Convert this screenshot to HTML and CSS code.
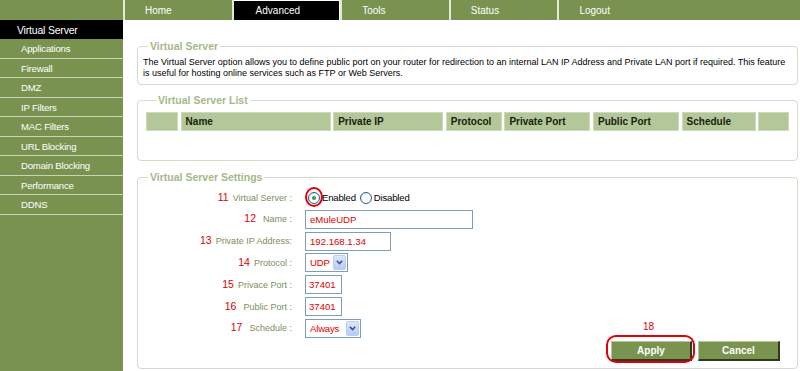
FILE: index.html
```html
<!DOCTYPE html>
<html>
<head>
<meta charset="utf-8">
<title>Virtual Server</title>
<link rel="stylesheet" href="styles.css">
</head>
<body>
<div class="page">
  <div class="corner"></div>
  <nav class="topnav">
    <span class="tab">Home</span>
    <span class="tab active">Advanced</span>
    <span class="tab">Tools</span>
    <span class="tab">Status</span>
    <span class="tab">Logout</span>
  </nav>
  <aside class="sidebar">
    <div class="side-title">Virtual Server</div>
    <ul class="side-list">
      <li>Applications</li>
      <li>Firewall</li>
      <li>DMZ</li>
      <li>IP Filters</li>
      <li>MAC Filters</li>
      <li>URL Blocking</li>
      <li>Domain Blocking</li>
      <li>Performance</li>
      <li>DDNS</li>
    </ul>
  </aside>
  <main class="content">
    <fieldset class="box box-intro">
      <legend>Virtual Server</legend>
      <p>The Virtual Server option allows you to define public port on your router for redirection to an internal LAN IP Address and Private LAN port if required. This feature is useful for hosting online services such as FTP or Web Servers.</p>
    </fieldset>
    <fieldset class="box box-list">
      <legend>Virtual Server List</legend>
      <div class="list-head">
        <div class="cell"></div>
        <div class="cell">Name</div>
        <div class="cell">Private IP</div>
        <div class="cell">Protocol</div>
        <div class="cell">Private Port</div>
        <div class="cell">Public Port</div>
        <div class="cell">Schedule</div>
        <div class="cell"></div>
      </div>
    </fieldset>
    <fieldset class="box box-settings">
      <legend>Virtual Server Settings</legend>
      <div class="form">
        <div class="lbl"><span class="num">11</span>Virtual Server :</div>
        <div class="radios">
          <span class="radio-mark"><span class="radio checked"></span></span><span class="rtext">Enabled</span>
          <span class="radio"></span><span class="rtext">Disabled</span>
        </div>

        <div class="lbl"><span class="num num-wide">12</span>Name :</div>
        <input class="inp w-name" type="text" value="eMuleUDP">

        <div class="lbl"><span class="num">13</span>Private IP Address:</div>
        <input class="inp w-ip" type="text" value="192.168.1.34">

        <div class="lbl"><span class="num">14</span>Protocol :</div>
        <div class="sel w-proto"><span class="sel-text">UDP</span><span class="sel-btn"><svg width="7" height="5" viewBox="0 0 7 5"><path d="M0.8 0.8L3.5 3.6L6.2 0.8" stroke="#3d5488" stroke-width="1.6" fill="none"/></svg></span></div>

        <div class="lbl"><span class="num">15</span>Privace Port :</div>
        <input class="inp w-port" type="text" value="37401">

        <div class="lbl"><span class="num num-wide">16</span>Public Port :</div>
        <input class="inp w-port" type="text" value="37401">

        <div class="lbl"><span class="num num-wide">17</span>Schedule :</div>
        <div class="sel w-sched"><span class="sel-text">Always</span><span class="sel-btn"><svg width="7" height="5" viewBox="0 0 7 5"><path d="M0.8 0.8L3.5 3.6L6.2 0.8" stroke="#3d5488" stroke-width="1.6" fill="none"/></svg></span></div>
      </div>
      <div class="actions">
        <div class="apply-wrap">
          <span class="mark-num">18</span>
          <button class="btn" type="button">Apply</button>
          <span class="ring"></span>
        </div>
        <button class="btn btn-cancel" type="button">Cancel</button>
      </div>
    </fieldset>
  </main>
</div>
</body>
</html>
```
FILE: styles.css
```css
html, body {
  margin: 0;
  padding: 0;
  background: #ffffff;
}
body {
  font-family: "Liberation Sans", Arial, sans-serif;
  font-size: 10px;
  color: #000;
}
.page {
  display: grid;
  grid-template-columns: 123px 677px;
  grid-template-rows: 20px 351px;
  width: 800px;
  height: 371px;
  overflow: hidden;
}
.corner {
  background: #7a9250;
}
.topnav {
  display: flex;
  background: #7a9250;
}
.tab {
  box-sizing: border-box;
  width: 108.6px;
  border-left: 2px solid #e2e9d4;
  color: #ffffff;
  padding-left: 20px;
  line-height: 21px;
  font-size: 10px;
}
.tab.active {
  background: #000;
  box-shadow: inset 0 1px 0 #ffffff, inset -1px 0 0 #ffffff;
  padding-left: 22px;
}
.sidebar {
  background: #7a9250;
  color: #ffffff;
}
.side-title {
  background: #000;
  height: 19px;
  line-height: 20px;
  padding-left: 17px;
  font-size: 10.5px;
  letter-spacing: -0.2px;
}
.side-list {
  list-style: none;
  margin: 0;
  padding: 0;
}
.side-list li {
  box-sizing: border-box;
  height: 19.56px;
  padding-top: 1px;
  line-height: 17.5px;
  border-bottom: 1px solid #c9d4b5;
  padding-left: 21px;
  font-size: 9.6px;
  letter-spacing: -0.2px;
}
.content {
  padding: 20px 2px 0 14px;
}
.box {
  margin: 0;
  padding: 0;
  border: 1px solid #d6dac8;
  border-radius: 4px;
  min-width: 0;
}
.box legend {
  margin-left: 10px;
  padding: 0 2px;
  font-weight: bold;
  color: #a6b88a;
  font-size: 10.5px;
  line-height: 12px;
}
.box-intro p {
  margin: 0;
  padding: 5px 5px 6px 5px;
  font-size: 9px;
  line-height: 10.5px;
}
.box-list {
  margin-top: 9px;
  padding: 6px 8px 29px 8px;
}
.list-head {
  display: grid;
  grid-template-columns: 32px 150px 110px 56px 86px 86px 74px 1fr;
  column-gap: 2.6px;
  height: 19px;
}
.cell {
  box-sizing: border-box;
  background: #b3c798;
  border: 1px solid #cddab9;
  font-weight: bold;
  color: #18220e;
  padding-left: 4px;
  line-height: 17px;
  font-size: 10px;
}
.box-settings {
  margin-top: 10px;
  padding: 5px 0 7px 0;
}
.form {
  display: grid;
  grid-template-columns: 154px 1fr;
  grid-auto-rows: 19px;
  column-gap: 13px;
  row-gap: 2.83px;
  align-items: center;
}
.lbl {
  text-align: right;
  color: #7c8e5c;
  line-height: 19px;
  font-size: 9px;
  white-space: nowrap;
}
.num {
  color: #e00000;
  font-size: 10.5px;
  margin-right: 4px;
}
.num-wide {
  margin-right: 7px;
}
.radios {
  display: flex;
  align-items: center;
  height: 19px;
  padding-left: 3px;
}
.radio-mark {
  position: relative;
  display: inline-flex;
}
.radio-mark::after {
  content: "";
  position: absolute;
  left: -3px;
  right: -3px;
  top: -5px;
  bottom: -3px;
  border: 2px solid #e00010;
  border-radius: 50%;
}
.radio {
  position: relative;
  box-sizing: border-box;
  width: 12px;
  height: 12px;
  border-radius: 50%;
  border: 1px solid #2c5a8c;
  background: radial-gradient(circle at 60% 65%, #ffffff 40%, #d8dce0 100%);
}
.radio.checked::after {
  content: "";
  position: absolute;
  left: 3px;
  top: 3px;
  width: 4px;
  height: 4px;
  border-radius: 50%;
  background: #2aa62a;
}
.rtext {
  margin: 0 4px 0 2px;
  font-size: 9.6px;
  letter-spacing: -0.2px;
  color: #000;
}
.inp {
  box-sizing: border-box;
  height: 19px;
  border: 1px solid #7f9db9;
  color: #e00000;
  font-family: "Liberation Sans", Arial, sans-serif;
  font-size: 9.6px;
  padding: 0 4px;
  margin: 0;
  background: #fff;
  justify-self: start;
}
.w-name { width: 168px; }
.w-ip { width: 86px; }
.w-port { width: 37px; padding: 0 3px; }
.sel {
  box-sizing: border-box;
  display: flex;
  height: 19px;
  border: 1px solid #7f9db9;
  background: #fff;
  justify-self: start;
}
.w-proto { width: 43px; }
.w-sched { width: 56px; }
.sel-text {
  flex: 1;
  padding-left: 4px;
  color: #e00000;
  line-height: 17px;
  font-size: 9.6px;
  letter-spacing: -0.2px;
}
.sel-btn {
  box-sizing: border-box;
  width: 13px;
  margin: 1px;
  border: 1px solid #b9cdf6;
  border-radius: 2px;
  background: linear-gradient(#dde7fe, #b7cbf6);
  display: flex;
  align-items: center;
  justify-content: center;
}
.actions {
  display: flex;
  justify-content: flex-end;
  gap: 6px;
  margin-top: 3px;
  padding-right: 17px;
}
.apply-wrap {
  position: relative;
  display: flex;
}
.mark-num {
  position: absolute;
  left: 32px;
  top: -19px;
  color: #e00000;
  font-size: 10px;
  line-height: 10px;
}
.ring {
  position: absolute;
  left: -5px;
  right: -3px;
  top: -6px;
  bottom: -2px;
  border: 2px solid #e00010;
  border-radius: 10px;
}
.btn {
  box-sizing: border-box;
  width: 81px;
  height: 20px;
  margin: 0;
  padding: 0;
  background: #7a9450;
  color: #ffffff;
  font-family: "Liberation Sans", Arial, sans-serif;
  font-weight: bold;
  font-size: 10px;
  border-style: solid;
  border-width: 1px 2px 2px 1px;
  border-color: #b4c698 #2e3a1c #2e3a1c #b4c698;
}
.btn-cancel {
  width: 82px;
}
```
